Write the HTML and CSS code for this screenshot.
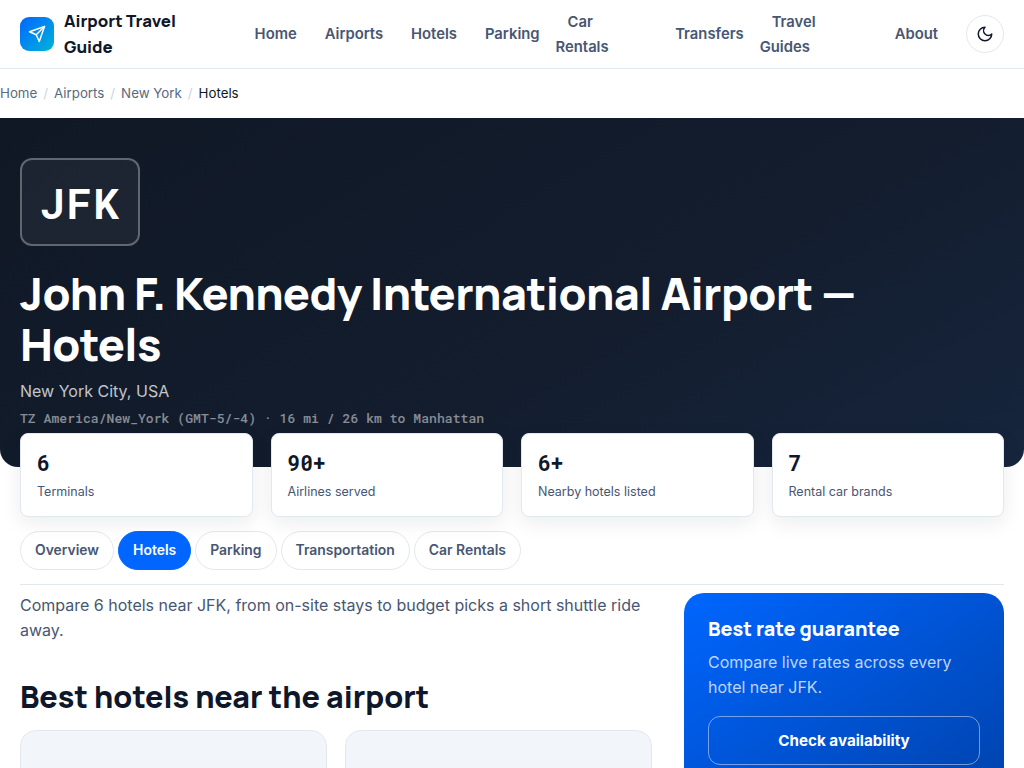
FILE: index.html
```html
<!DOCTYPE html>
<html lang="en">
<head>
    <meta charset="utf-8">
    <title>John F. Kennedy International Airport - Hotels</title>
    <meta name="viewport" content="width=device-width, initial-scale=1.0">
    <link rel="stylesheet" href="styles.css">
</head>
<body>
<header class="topbar">
    <a class="brand" href="#">
        <span class="brand-mark">
            <svg width="18" height="18" viewBox="0 0 24 24" fill="none" stroke="#fff" stroke-width="2" stroke-linecap="round" stroke-linejoin="round"><path d="m22 2-7 20-4-9-9-4Z"/><path d="M22 2 11 13"/></svg>
        </span>
        <span class="brand-name">Airport Travel Guide</span>
    </a>
    <ul class="nav">
        <li><a href="#">Home</a></li>
        <li><a href="#">Airports</a></li>
        <li><a href="#">Hotels</a></li>
        <li><a href="#">Parking</a></li>
        <li><a href="#">Car Rentals</a></li>
        <li><a href="#">Transfers</a></li>
        <li><a href="#">Travel Guides</a></li>
        <li><a href="#">About</a></li>
    </ul>
    <button class="theme-btn" aria-label="Toggle theme">
        <svg width="18" height="18" viewBox="0 0 24 24" fill="none" stroke="currentColor" stroke-width="2" stroke-linecap="round" stroke-linejoin="round"><path d="M12 3a6 6 0 0 0 9 9 9 9 0 1 1-9-9Z"/></svg>
    </button>
</header>

<nav class="crumbs">
    <a href="#">Home</a><span class="sep">/</span>
    <a href="#">Airports</a><span class="sep">/</span>
    <a href="#">New York</a><span class="sep">/</span>
    <span class="current">Hotels</span>
</nav>

<section class="hero">
    <div class="code-badge">JFK</div>
    <h1>John F. Kennedy International Airport — Hotels</h1>
    <p class="hero-city">New York City, USA</p>
    <p class="hero-meta">TZ America/New_York (GMT-5/-4) · 16 mi / 26 km to Manhattan</p>
</section>

<div class="stats">
    <div class="stat"><div class="stat-num">6</div><div class="stat-label">Terminals</div></div>
    <div class="stat"><div class="stat-num">90+</div><div class="stat-label">Airlines served</div></div>
    <div class="stat"><div class="stat-num">6+</div><div class="stat-label">Nearby hotels listed</div></div>
    <div class="stat"><div class="stat-num">7</div><div class="stat-label">Rental car brands</div></div>
</div>

<div class="tabs">
    <a class="tab" href="#">Overview</a>
    <a class="tab active" href="#">Hotels</a>
    <a class="tab" href="#">Parking</a>
    <a class="tab" href="#">Transportation</a>
    <a class="tab" href="#">Car Rentals</a>
</div>

<div class="layout">
    <main>
        <p class="intro">Compare 6 hotels near JFK, from on-site stays to budget picks a short shuttle ride away.</p>
        <h2>Best hotels near the airport</h2>
        <div class="hotel-grid">
            <div class="hotel-card"></div>
            <div class="hotel-card"></div>
        </div>
    </main>
    <aside class="promo">
        <h3>Best rate guarantee</h3>
        <p>Compare live rates across every hotel near JFK.</p>
        <a class="promo-btn" href="#">Check availability</a>
    </aside>
</div>
</body>
</html>
```

FILE: styles.css
```css
* {
    box-sizing: border-box;
}
html, body {
    height: 768px;
    overflow: hidden;
}
body {
    margin: 0;
    background: #fff;
    color: #0f172a;
    font-family: Inter, "Liberation Sans", sans-serif;
    font-size: 16px;
    line-height: 1.6;
}
a {
    color: inherit;
    text-decoration: none;
}

/* top bar */
.topbar {
    display: flex;
    align-items: center;
    justify-content: space-between;
    gap: 16px;
    height: 69px;
    padding: 0 20px;
    border-bottom: 1px solid #e2e8f0;
}
.brand {
    display: flex;
    align-items: center;
    gap: 10px;
    font-family: Manrope, Inter, sans-serif;
    font-weight: 800;
    font-size: 16.8px;
    line-height: 26px;
    color: #0f172a;
}
.brand-mark {
    display: flex;
    align-items: center;
    justify-content: center;
    flex: none;
    width: 34px;
    height: 34px;
    border-radius: 9px;
    background: linear-gradient(135deg, #0066ff, #00b4d8);
}
.nav {
    display: flex;
    align-items: center;
    gap: 4px;
    margin: 0 0 1px;
    padding: 0;
    list-style: none;
}
.nav li {
    line-height: 24px;
}
.nav a {
    padding: 8px 12px;
    color: #475672;
    font-size: 14.8px;
    font-weight: 600;
}
.theme-btn {
    display: flex;
    align-items: center;
    justify-content: center;
    flex: none;
    width: 38px;
    height: 38px;
    padding: 0;
    border: 1px solid #e2e8f0;
    border-radius: 50%;
    background: #fff;
    color: #0f172a;
}

/* breadcrumb */
.crumbs {
    display: flex;
    align-items: center;
    gap: 6px;
    height: 49px;
    font-size: 13.3px;
    color: #5a6a80;
}
.crumbs .sep {
    color: #cbd5e1;
}
.crumbs .current {
    color: #0f172a;
}

/* hero */
.hero {
    height: 349px;
    padding: 40px 20px 0;
    border-radius: 0 0 18px 18px;
    background: linear-gradient(150deg, #101825, #131d2e 60%, #16253d);
    color: #fff;
}
.code-badge {
    display: flex;
    align-items: center;
    justify-content: center;
    width: 120px;
    height: 88px;
    padding-top: 3px;
    border: 2px solid rgba(255, 255, 255, .3);
    border-radius: 12px;
    background: rgba(255, 255, 255, .05);
    font-family: "Roboto Mono", "DejaVu Sans Mono", monospace;
    font-size: 41.6px;
    font-weight: 800;
    letter-spacing: 2px;
}
.hero h1 {
    margin: 21px 0 0;
    font-family: Manrope, Inter, sans-serif;
    font-size: 44.8px;
    font-weight: 800;
    line-height: 51px;
    letter-spacing: -.6px;
}
.hero-city {
    margin: 10px 0 0;
    color: rgba(255, 255, 255, .75);
    font-size: 16px;
}
.hero-meta {
    margin: 3px 0 0;
    color: rgba(255, 255, 255, .5);
    font-family: "Roboto Mono", "DejaVu Sans Mono", monospace;
    font-size: 13.12px;
    font-weight: 500;
}

/* stat cards */
.stats {
    display: grid;
    grid-template-columns: repeat(4, 1fr);
    gap: 18px;
    margin: -34px 20px 0;
    position: relative;
}
.stat {
    height: 84px;
    padding: 14px 16px;
    border: 1px solid #e2e8f0;
    border-radius: 8px;
    background: #fff;
    box-shadow: 0 6px 20px rgba(15, 23, 42, .08);
}
.stat-num {
    font-family: "Roboto Mono", "DejaVu Sans Mono", monospace;
    font-size: 21.28px;
    font-weight: 800;
    line-height: 30px;
}
.stat-label {
    margin-top: 4px;
    color: #475672;
    font-size: 12.5px;
}

/* tabs */
.tabs {
    display: flex;
    gap: 4px;
    margin: 14px 20px 0;
    padding-bottom: 14px;
    border-bottom: 1px solid #e2e8f0;
}
.tab {
    padding: 7px 14px 8px;
    border: 1px solid #e2e8f0;
    border-radius: 20px;
    color: #475672;
    font-size: 13.92px;
    font-weight: 600;
    line-height: 22px;
}
.tab.active {
    border-color: #0066ff;
    background: #0066ff;
    color: #fff;
}

/* main + sidebar */
.layout {
    display: grid;
    grid-template-columns: 1fr 320px;
    gap: 32px;
    padding: 8px 20px 0;
}
.intro {
    margin: 0;
    color: #475672;
    font-size: 16px;
    line-height: 25px;
}
main h2 {
    margin: 34px 0 0;
    font-family: Manrope, Inter, sans-serif;
    font-size: 30.4px;
    font-weight: 800;
    line-height: 40px;
}
.hotel-grid {
    display: grid;
    grid-template-columns: 1fr 1fr;
    gap: 18px;
    margin-top: 13px;
}
.hotel-card {
    height: 300px;
    border: 1px solid #e2e8f0;
    border-radius: 16px;
    background: #f2f6fb;
}
.promo {
    height: 300px;
    padding: 20px 24px;
    border-radius: 20px;
    background: linear-gradient(145deg, #0066ff, #003a99);
    color: #fff;
}
.promo h3 {
    margin: 0;
    font-family: Manrope, Inter, sans-serif;
    font-size: 19.7px;
    font-weight: 800;
    line-height: 32px;
}
.promo p {
    margin: 5px 0 0;
    color: rgba(255, 255, 255, .75);
    font-size: 16px;
    line-height: 25px;
}
.promo-btn {
    display: block;
    margin-top: 16px;
    padding: 11px 0;
    border: 1px solid rgba(255, 255, 255, .45);
    border-radius: 12px;
    font-size: 15.2px;
    font-weight: 700;
    line-height: 25px;
    text-align: center;
}
```
